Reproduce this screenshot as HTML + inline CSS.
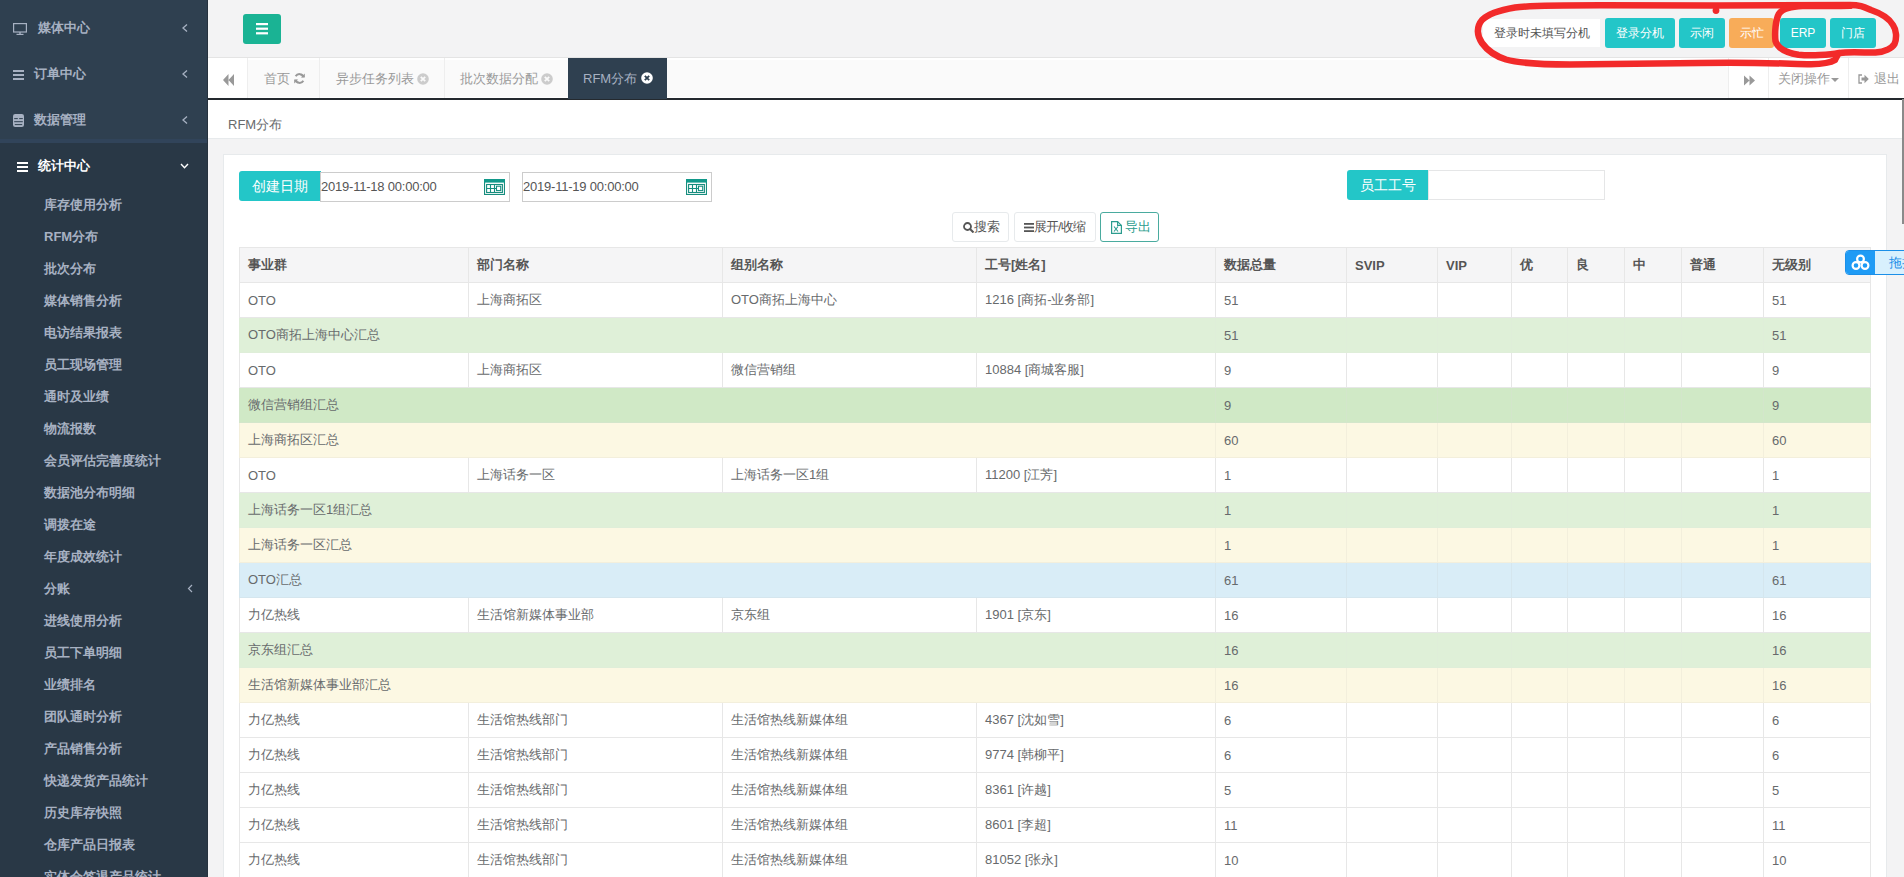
<!DOCTYPE html>
<html><head><meta charset="utf-8"><style>
*{box-sizing:border-box;margin:0;padding:0}
html,body{width:1904px;height:877px;overflow:hidden;background:#f3f3f4;font-family:"Liberation Sans",sans-serif;font-size:13px;color:#676a6c}
.abs{position:absolute}
#side{position:absolute;left:0;top:0;width:208px;height:877px;background:#2f4050;overflow:hidden}
.nv{position:absolute;left:0;width:208px;height:46px;color:#a7b1c2;font-weight:bold;font-size:13px}
.nv .t{position:absolute;top:15px;line-height:16px;white-space:nowrap}
.nv .ch{position:absolute;left:181px;top:18px;width:8px;height:10px}
#act{position:absolute;left:0;top:143px;width:208px;height:734px;background:#293846}
.sub{position:absolute;left:44px;color:#a7b1c2;font-weight:bold;font-size:13px;line-height:16px;white-space:nowrap}
#top{position:absolute;left:208px;top:0;width:1696px;height:58px;background:#f3f3f4;border-bottom:1px solid #e7eaec}
#tabs{position:absolute;left:208px;top:57px;width:1696px;height:43px;background:#fff;border-top:1px solid #e4e4e4;border-bottom:2px solid #24292e}
.tab{position:absolute;top:0;height:40px;border-left:1px solid #eee;color:#999;line-height:42px;white-space:nowrap}
#hdr{position:absolute;left:208px;top:100px;width:1696px;height:39px;background:#fff;border-bottom:1px solid #e7eaec}
#card{position:absolute;left:223px;top:154px;width:1664px;height:800px;background:#fff;border:1px solid #e7eaec}
table{border-collapse:collapse;position:absolute;left:239px;top:247px;table-layout:fixed}
td,th{border:1px solid #e7e7e7;height:35px;padding:0 8px;font-size:13px;text-align:left;white-space:nowrap;overflow:hidden;color:#676a6c;font-weight:normal}
th{background:#f5f5f6;font-weight:bold;color:#555}
tr.g td{background:#dff0d8;border-color:#dfeed9}
tr.gh td{background:#d0e9c6;border-color:#d3e6cb}
tr.y td{background:#fcf8e3;border-color:#f3efdc}
tr.b td{background:#d9edf7;border-color:#d5e6ee}
.btn{position:absolute;height:30px;border-radius:3px;color:#fff;font-size:12px;line-height:30px;text-align:center;white-space:nowrap}
</style></head><body>
<div id="side"><div class="nv" style="top:5px">
<svg class="abs" style="left:13px;top:18px" width="14" height="12" viewBox="0 0 14 12"><rect x="0.6" y="0.6" width="12.8" height="8.4" fill="none" stroke="#a7b1c2" stroke-width="1.2"/><rect x="6.3" y="9" width="1.4" height="2" fill="#a7b1c2"/><rect x="3.5" y="10.8" width="7" height="1.2" fill="#a7b1c2"/></svg>
<span class="t" style="left:38px">媒体中心</span><svg class="ch" viewBox="0 0 8 10"><path d="M6 1.5 L2 5 L6 8.5" fill="none" stroke="#a7b1c2" stroke-width="1.3"/></svg></div><div class="nv" style="top:51px">
<svg class="abs" style="left:13px;top:19px" width="11" height="10" viewBox="0 0 11 10"><rect x="0" y="0" width="11" height="2" fill="#a7b1c2"/><rect x="0" y="4" width="11" height="2" fill="#a7b1c2"/><rect x="0" y="8" width="11" height="2" fill="#a7b1c2"/></svg>
<span class="t" style="left:34px">订单中心</span><svg class="ch" viewBox="0 0 8 10"><path d="M6 1.5 L2 5 L6 8.5" fill="none" stroke="#a7b1c2" stroke-width="1.3"/></svg></div><div class="nv" style="top:97px">
<svg class="abs" style="left:13px;top:17px" width="11" height="13" viewBox="0 0 11 13"><rect x="0" y="0" width="11" height="13" rx="2.2" fill="#a7b1c2"/><path d="M1.2 4.6 H4.8 M6.2 4.6 H9.8 M1.2 7.7 H9.8 M1.8 10.6 H9.2" stroke="#2f4050" stroke-width="1"/></svg>
<span class="t" style="left:34px">数据管理</span><svg class="ch" viewBox="0 0 8 10"><path d="M6 1.5 L2 5 L6 8.5" fill="none" stroke="#a7b1c2" stroke-width="1.3"/></svg></div><div id="act"></div><div class="abs" style="left:0;top:139px;width:208px;height:4px;background:#31445a"></div><div class="abs" style="left:207px;top:0;width:1px;height:877px;background:#26323e"></div><div class="nv" style="top:143px;color:#fff">
<svg class="abs" style="left:17px;top:19px" width="11" height="10" viewBox="0 0 11 10"><rect x="0" y="0" width="11" height="2" fill="#fff"/><rect x="0" y="4" width="11" height="2" fill="#fff"/><rect x="0" y="8" width="11" height="2" fill="#fff"/></svg>
<span class="t" style="left:38px">统计中心</span>
<svg class="abs" style="left:180px;top:20px" width="9" height="6" viewBox="0 0 9 6"><path d="M1 1 L4.5 4.8 L8 1" fill="none" stroke="#fff" stroke-width="1.4"/></svg></div><span class="sub" style="top:197px">库存使用分析</span><span class="sub" style="top:229px">RFM分布</span><span class="sub" style="top:261px">批次分布</span><span class="sub" style="top:293px">媒体销售分析</span><span class="sub" style="top:325px">电访结果报表</span><span class="sub" style="top:357px">员工现场管理</span><span class="sub" style="top:389px">通时及业绩</span><span class="sub" style="top:421px">物流报数</span><span class="sub" style="top:453px">会员评估完善度统计</span><span class="sub" style="top:485px">数据池分布明细</span><span class="sub" style="top:517px">调拨在途</span><span class="sub" style="top:549px">年度成效统计</span><span class="sub" style="top:581px">分账</span><svg class="abs" style="left:187px;top:584px" width="6" height="9" viewBox="0 0 6 9"><path d="M5 1 L1.5 4.5 L5 8" fill="none" stroke="#a7b1c2" stroke-width="1.2"/></svg><span class="sub" style="top:613px">进线使用分析</span><span class="sub" style="top:645px">员工下单明细</span><span class="sub" style="top:677px">业绩排名</span><span class="sub" style="top:709px">团队通时分析</span><span class="sub" style="top:741px">产品销售分析</span><span class="sub" style="top:773px">快递发货产品统计</span><span class="sub" style="top:805px">历史库存快照</span><span class="sub" style="top:837px">仓库产品日报表</span><span class="sub" style="top:869px">实体会签退产品统计</span></div>
<div id="top"><div class="abs" style="left:35px;top:14px;width:38px;height:30px;background:#1ab394;border-radius:3px">
<svg class="abs" style="left:13px;top:9px" width="12" height="12" viewBox="0 0 12 12"><rect x="0" y="0" width="12" height="2.2" fill="#fff"/><rect x="0" y="4.6" width="12" height="2.2" fill="#fff"/><rect x="0" y="9.2" width="12" height="2.2" fill="#fff"/></svg></div><div class="abs" style="left:1275px;top:19px;width:117px;height:28px;background:#fff;color:#555;font-size:12px;line-height:28px;padding-left:11px;white-space:nowrap">登录时未填写分机</div><div class="btn" style="left:1397px;top:18px;width:70px;background:#23c6c8">登录分机</div><div class="btn" style="left:1471px;top:18px;width:46px;background:#23c6c8">示闲</div><div class="btn" style="left:1521px;top:18px;width:45px;background:#f8ac59">示忙</div><div class="btn" style="left:1572px;top:18px;width:46px;background:#23c6c8">ERP</div><div class="btn" style="left:1622px;top:18px;width:46px;background:#23c6c8">门店</div></div>
<div id="tabs"><div class="abs" style="left:39px;top:2px;width:1481px;height:37px;background:#fafafa"></div><svg class="abs" style="left:15px;top:16px" width="11" height="12" viewBox="0 0 11 12"><path d="M5.5 0 L0 6 L5.5 12 Z M11 0 L5.5 6 L11 12 Z" fill="#999"/></svg><div class="tab" style="left:39px;width:72px;"><span class="abs" style="left:16px">首页</span><svg class="abs" style="left:46px;top:15px" width="11" height="11" viewBox="0 0 12 12"><path d="M10.5 4.5 A4.8 4.8 0 0 0 1.8 3.6" fill="none" stroke="#999" stroke-width="2.2"/><path d="M1.5 7.5 A4.8 4.8 0 0 0 10.2 8.4" fill="none" stroke="#999" stroke-width="2.2"/><path d="M7.5 4.8 L11.8 4.8 L11.8 0.5 Z" fill="#999"/><path d="M4.5 7.2 L0.2 7.2 L0.2 11.5 Z" fill="#999"/></svg></div><div class="tab" style="left:111px;width:125px;"><span class="abs" style="left:16px">异步任务列表</span><svg class="abs" style="left:97px;top:15px" width="12" height="12" viewBox="0 0 12 12"><circle cx="6" cy="6" r="5.8" fill="#ccc"/><path d="M3.8 3.8 L8.2 8.2 M8.2 3.8 L3.8 8.2" stroke="#fafafa" stroke-width="1.8"/></svg></div><div class="tab" style="left:236px;width:124px;"><span class="abs" style="left:15px">批次数据分配</span><svg class="abs" style="left:96px;top:15px" width="12" height="12" viewBox="0 0 12 12"><circle cx="6" cy="6" r="5.8" fill="#ccc"/><path d="M3.8 3.8 L8.2 8.2 M8.2 3.8 L3.8 8.2" stroke="#fafafa" stroke-width="1.8"/></svg></div><div class="tab" style="left:360px;width:99px;background:#2f4050;border-left:0;top:0;height:41px;line-height:42px;color:#a7b1c2"><span class="abs" style="left:15px">RFM分布</span><svg class="abs" style="left:73px;top:14px" width="12" height="12" viewBox="0 0 12 12"><circle cx="6" cy="6" r="5.8" fill="#fff"/><path d="M3.8 3.8 L8.2 8.2 M8.2 3.8 L3.8 8.2" stroke="#2f4050" stroke-width="1.8"/></svg></div><div class="abs" style="left:1520px;top:0;width:40px;height:40px;border-left:1px solid #eee;background:#fff"><svg class="abs" style="left:15px;top:17px" width="11" height="11" viewBox="0 0 11 11"><path d="M0 0.5 L5.5 5.5 L0 10.5 Z M5.5 0.5 L11 5.5 L5.5 10.5 Z" fill="#999"/></svg></div><div class="abs" style="left:1560px;top:0;width:81px;height:40px;border-left:1px solid #eee;background:#fff;color:#999;line-height:42px;white-space:nowrap"><span class="abs" style="left:9px">关闭操作</span><svg class="abs" style="left:62px;top:20px" width="8" height="4" viewBox="0 0 8 4"><path d="M0 0 L8 0 L4 4Z" fill="#999"/></svg></div><div class="abs" style="left:1640px;top:0;width:60px;height:40px;border-left:1px solid #eee;background:#fff;color:#999;line-height:42px;white-space:nowrap"><svg class="abs" style="left:9px;top:16px" width="11" height="10" viewBox="0 0 11 10"><path d="M4 1 L1 1 L1 9 L4 9" fill="none" stroke="#999" stroke-width="1.3"/><path d="M3.5 3.5 L6.5 3.5 L6.5 0.8 L10.8 5 L6.5 9.2 L6.5 6.5 L3.5 6.5 Z" fill="#999"/></svg><span class="abs" style="left:25px">退出</span></div></div>
<div id="hdr"><span class="abs" style="left:20px;top:17px;line-height:16px;color:#676a6c">RFM分布</span></div>
<div id="card"></div>
<div class="abs" style="left:239px;top:171px;width:82px;height:30px;background:#23c6c8;border-radius:3px 0 0 3px;color:#fff;font-size:14px;line-height:30px;text-align:center">创建日期</div><div class="abs" style="left:320px;top:172px;width:190px;height:30px;border:1px solid #ccc;background:#fff;color:#555;line-height:28px;padding-left:0;white-space:nowrap;letter-spacing:-0.22px">2019-11-18 00:00:00</div><svg class="abs" style="left:484px;top:179px" width="21" height="16" viewBox="0 0 21 16"><g fill="none" stroke="#178d7e" stroke-width="1.1"><rect x="0.55" y="0.55" width="19.9" height="14.9"/><rect x="2.6" y="5.5" width="15.8" height="8"/><path d="M6.5 5.5 V13.5 M10.5 5.5 V13.5 M2.6 9.5 H12.5"/><rect x="12.5" y="7.2" width="4.2" height="4.4"/></g><rect x="0" y="0" width="21" height="3.6" fill="#12998a"/></svg><div class="abs" style="left:522px;top:172px;width:190px;height:30px;border:1px solid #ccc;background:#fff;color:#555;line-height:28px;padding-left:0;white-space:nowrap;letter-spacing:-0.22px">2019-11-19 00:00:00</div><svg class="abs" style="left:686px;top:179px" width="21" height="16" viewBox="0 0 21 16"><g fill="none" stroke="#178d7e" stroke-width="1.1"><rect x="0.55" y="0.55" width="19.9" height="14.9"/><rect x="2.6" y="5.5" width="15.8" height="8"/><path d="M6.5 5.5 V13.5 M10.5 5.5 V13.5 M2.6 9.5 H12.5"/><rect x="12.5" y="7.2" width="4.2" height="4.4"/></g><rect x="0" y="0" width="21" height="3.6" fill="#12998a"/></svg><div class="abs" style="left:1347px;top:170px;width:82px;height:30px;background:#23c6c8;border-radius:3px 0 0 3px;color:#fff;font-size:14px;line-height:30px;text-align:center">员工工号</div><div class="abs" style="left:1428px;top:170px;width:177px;height:30px;border:1px solid #e5e6e7;background:#fff"></div><div class="abs" style="left:952px;top:212px;width:57px;height:30px;border:1px solid #e7eaec;border-radius:3px;background:#fff;color:#555;line-height:28px;white-space:nowrap"><svg class="abs" style="left:10px;top:9px" width="11" height="11" viewBox="0 0 11 11"><circle cx="4.5" cy="4.5" r="3.5" fill="none" stroke="#555" stroke-width="1.8"/><path d="M7 7 L10.5 10.5" stroke="#555" stroke-width="2"/></svg><span class="abs" style="left:21px">搜索</span></div><div class="abs" style="left:1014px;top:212px;width:82px;height:30px;border:1px solid #e7eaec;border-radius:3px;background:#fff;color:#555;line-height:28px;white-space:nowrap"><svg class="abs" style="left:9px;top:10px" width="10" height="9" viewBox="0 0 10 9"><rect x="0" y="0" width="10" height="1.8" fill="#555"/><rect x="0" y="3.6" width="10" height="1.8" fill="#555"/><rect x="0" y="7.2" width="10" height="1.8" fill="#555"/></svg><span class="abs" style="left:19px;letter-spacing:-1px">展开/收缩</span></div><div class="abs" style="left:1100px;top:212px;width:59px;height:30px;border:1px solid #4aab9f;border-radius:3px;background:#fff;color:#2b9c8e;line-height:28px;white-space:nowrap"><svg class="abs" style="left:10px;top:8px" width="11" height="13" viewBox="0 0 11 13"><path d="M0.6 0.6 L6.6 0.6 L10.4 4.4 L10.4 12.4 L0.6 12.4 Z" fill="none" stroke="#2b9c8e" stroke-width="1.2"/><path d="M6.6 0.6 L6.6 4.4 L10.4 4.4" fill="none" stroke="#2b9c8e" stroke-width="1.1"/><path d="M3 5.5 L7 10.5 M7 5.5 L3 10.5" stroke="#2b9c8e" stroke-width="1.1"/></svg><span class="abs" style="left:24px">导出</span></div>
<table style="width:1632px"><colgroup><col style="width:229px"><col style="width:254px"><col style="width:254px"><col style="width:239px"><col style="width:131px"><col style="width:91px"><col style="width:74px"><col style="width:56px"><col style="width:57px"><col style="width:57px"><col style="width:82px"><col style="width:107px"></colgroup><tr><th>事业群</th><th>部门名称</th><th>组别名称</th><th>工号[姓名]</th><th>数据总量</th><th>SVIP</th><th>VIP</th><th>优</th><th>良</th><th>中</th><th>普通</th><th>无级别</th></tr><tr><td>OTO</td><td>上海商拓区</td><td>OTO商拓上海中心</td><td>1216 [商拓-业务部]</td><td>51</td><td></td><td></td><td></td><td></td><td></td><td></td><td>51</td></tr><tr class="g"><td colspan="4">OTO商拓上海中心汇总</td><td>51</td><td></td><td></td><td></td><td></td><td></td><td></td><td>51</td></tr><tr><td>OTO</td><td>上海商拓区</td><td>微信营销组</td><td>10884 [商城客服]</td><td>9</td><td></td><td></td><td></td><td></td><td></td><td></td><td>9</td></tr><tr class="gh"><td colspan="4">微信营销组汇总</td><td>9</td><td></td><td></td><td></td><td></td><td></td><td></td><td>9</td></tr><tr class="y"><td colspan="4">上海商拓区汇总</td><td>60</td><td></td><td></td><td></td><td></td><td></td><td></td><td>60</td></tr><tr><td>OTO</td><td>上海话务一区</td><td>上海话务一区1组</td><td>11200 [江芳]</td><td>1</td><td></td><td></td><td></td><td></td><td></td><td></td><td>1</td></tr><tr class="g"><td colspan="4">上海话务一区1组汇总</td><td>1</td><td></td><td></td><td></td><td></td><td></td><td></td><td>1</td></tr><tr class="y"><td colspan="4">上海话务一区汇总</td><td>1</td><td></td><td></td><td></td><td></td><td></td><td></td><td>1</td></tr><tr class="b"><td colspan="4">OTO汇总</td><td>61</td><td></td><td></td><td></td><td></td><td></td><td></td><td>61</td></tr><tr><td>力亿热线</td><td>生活馆新媒体事业部</td><td>京东组</td><td>1901 [京东]</td><td>16</td><td></td><td></td><td></td><td></td><td></td><td></td><td>16</td></tr><tr class="g"><td colspan="4">京东组汇总</td><td>16</td><td></td><td></td><td></td><td></td><td></td><td></td><td>16</td></tr><tr class="y"><td colspan="4">生活馆新媒体事业部汇总</td><td>16</td><td></td><td></td><td></td><td></td><td></td><td></td><td>16</td></tr><tr><td>力亿热线</td><td>生活馆热线部门</td><td>生活馆热线新媒体组</td><td>4367 [沈如雪]</td><td>6</td><td></td><td></td><td></td><td></td><td></td><td></td><td>6</td></tr><tr><td>力亿热线</td><td>生活馆热线部门</td><td>生活馆热线新媒体组</td><td>9774 [韩柳平]</td><td>6</td><td></td><td></td><td></td><td></td><td></td><td></td><td>6</td></tr><tr><td>力亿热线</td><td>生活馆热线部门</td><td>生活馆热线新媒体组</td><td>8361 [许越]</td><td>5</td><td></td><td></td><td></td><td></td><td></td><td></td><td>5</td></tr><tr><td>力亿热线</td><td>生活馆热线部门</td><td>生活馆热线新媒体组</td><td>8601 [李超]</td><td>11</td><td></td><td></td><td></td><td></td><td></td><td></td><td>11</td></tr><tr><td>力亿热线</td><td>生活馆热线部门</td><td>生活馆热线新媒体组</td><td>81052 [张永]</td><td>10</td><td></td><td></td><td></td><td></td><td></td><td></td><td>10</td></tr></table>
<div class="abs" style="left:1845px;top:250px;width:70px;height:25px;background:#d8f0fd;border:1px solid #1b8fe8;border-radius:4px;overflow:hidden">
<div class="abs" style="left:0;top:0;width:29px;height:23px;background:#1e9bf5"></div>
<svg class="abs" style="left:5px;top:3px" width="19" height="17" viewBox="0 0 19 17"><circle cx="9.5" cy="5" r="3.4" fill="none" stroke="#fff" stroke-width="2.2"/><circle cx="5" cy="11.5" r="3.4" fill="none" stroke="#fff" stroke-width="2.2"/><circle cx="14" cy="11.5" r="3.4" fill="none" stroke="#fff" stroke-width="2.2"/></svg>
<span class="abs" style="left:43px;top:4px;color:#1b8fe8;font-size:13px;line-height:16px;white-space:nowrap">拖拽</span></div>
<div class="abs" style="left:1902px;top:99px;width:2px;height:125px;background:#8a8a8a"></div>
<svg class="abs" style="left:0;top:0;pointer-events:none" width="1904" height="877" viewBox="0 0 1904 877">
<g fill="none" stroke="#f22a2a" stroke-width="6.5" stroke-linecap="round" stroke-linejoin="round">
<path d="M1716 5.5 L1600 5.2 C1560 5.2 1530 5.5 1515 7.5 C1500 10 1488 14 1482 20 C1476 27 1477 36 1482 43 C1487 50 1495 56 1506 59.5 C1520 63.5 1545 64.5 1570 64.5 L1700 63 C1760 62 1790 64 1811 64.2 C1822 64 1830 63 1835 60 C1837 56 1838 53.5 1840 53 C1848 51.5 1862 52.5 1875.5 52.6 C1885 52 1892 48 1894.5 44 C1897 38 1896.5 30 1893 25 C1889 18 1880 13 1871 10 C1864 7 1860 5 1850 5 L1716 5.5 Z"/>
<path d="M1839 53 C1830 55 1810 56 1798.5 54.7 C1788 53 1778 49 1775.5 41 C1774.5 33 1775.5 20 1779 13.7 C1782 9 1790 6.5 1802.8 6 C1815 5.8 1830 6.5 1850 5.8"/>
</g>
<circle cx="1716" cy="10.5" r="3.4" fill="#f22a2a"/>
</svg>
</body></html>
